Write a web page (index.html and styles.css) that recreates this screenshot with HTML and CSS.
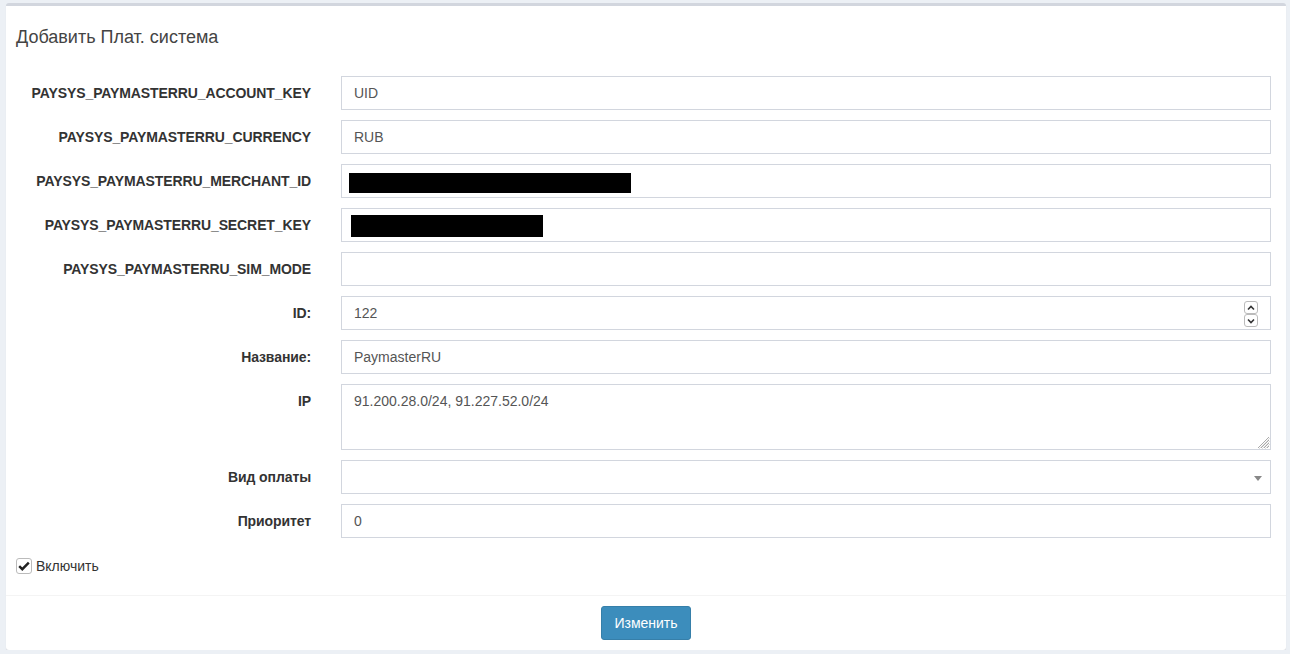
FILE: index.html
```html
<!DOCTYPE html>
<html lang="ru">
<head>
    <meta charset="UTF-8">
    <meta name="viewport" content="width=device-width, initial-scale=1.0">
    <title>Добавить Плат. система</title>
    <link rel="stylesheet" href="styles.css">
</head>
<body>

    <!-- Блок формы -->
    <div class="box">
        <div class="box-header">
            <h3 class="box-title">Добавить Плат. система</h3>
        </div>

        <form class="box-body">
            <div class="form-group">
                <label class="control-label">PAYSYS_PAYMASTERRU_ACCOUNT_KEY</label>
                <div class="control"><input class="form-control" type="text" value="UID"></div>
            </div>
            <div class="form-group">
                <label class="control-label">PAYSYS_PAYMASTERRU_CURRENCY</label>
                <div class="control"><input class="form-control" type="text" value="RUB"></div>
            </div>
            <div class="form-group">
                <label class="control-label">PAYSYS_PAYMASTERRU_MERCHANT_ID</label>
                <div class="control">
                    <input class="form-control" type="text" value="">
                    <span class="redacted redacted-merchant"></span>
                </div>
            </div>
            <div class="form-group">
                <label class="control-label">PAYSYS_PAYMASTERRU_SECRET_KEY</label>
                <div class="control">
                    <input class="form-control" type="text" value="">
                    <span class="redacted redacted-secret"></span>
                </div>
            </div>
            <div class="form-group">
                <label class="control-label">PAYSYS_PAYMASTERRU_SIM_MODE</label>
                <div class="control"><input class="form-control" type="text" value=""></div>
            </div>
            <div class="form-group">
                <label class="control-label">ID:</label>
                <div class="control">
                    <input class="form-control" type="text" value="122">
                    <span class="spinner">
                        <span class="spin spin-up">
                            <svg width="8" height="6" viewBox="0 0 8 6"><path d="M1 4.5 L4 1.5 L7 4.5" fill="none" stroke="#333" stroke-width="1.6"/></svg>
                        </span>
                        <span class="spin spin-down">
                            <svg width="8" height="6" viewBox="0 0 8 6"><path d="M1 1.5 L4 4.5 L7 1.5" fill="none" stroke="#333" stroke-width="1.6"/></svg>
                        </span>
                    </span>
                </div>
            </div>
            <div class="form-group">
                <label class="control-label">Название:</label>
                <div class="control"><input class="form-control" type="text" value="PaymasterRU"></div>
            </div>
            <div class="form-group">
                <label class="control-label">IP</label>
                <div class="control">
                    <textarea class="form-control textarea">91.200.28.0/24, 91.227.52.0/24</textarea>
                    <svg class="grip" width="14" height="14" viewBox="0 0 14 14">
                        <path d="M13 2 L2 13 M13 5 L5 13 M13 8 L8 13 M13 11 L11 13" stroke="#aaa" stroke-width="1"/>
                        <path d="M14 3 L3 14 M14 6 L6 14 M14 9 L9 14" stroke="#ddd" stroke-width="1"/>
                    </svg>
                </div>
            </div>
            <div class="form-group">
                <label class="control-label">Вид оплаты</label>
                <div class="control">
                    <div class="form-control select"><span class="caret"></span></div>
                </div>
            </div>
            <div class="form-group">
                <label class="control-label">Приоритет</label>
                <div class="control"><input class="form-control" type="text" value="0"></div>
            </div>

            <div class="checkbox">
                <span class="check-box">
                    <svg width="12" height="10" viewBox="0 0 12 10"><path d="M1.2 5.2 L4.3 8.2 L10.8 1.6" fill="none" stroke="#222" stroke-width="2.4"/></svg>
                </span>
                <span>Включить</span>
            </div>
        </form>

        <div class="box-footer">
            <button class="btn btn-primary" type="button">Изменить</button>
        </div>
    </div>

</body>
</html>
```

FILE: styles.css
```css
/* фон страницы */
body {
    font-family: "Liberation Sans", Arial, sans-serif;
    font-size: 14px;
    line-height: 20px;
    background-color: #ecf0f5;
    color: #333;
    margin: 0;
    padding: 3px 4px 0 6px;
}

/* блок */
.box {
    background: #ffffff;
    border-top: 3px solid #d2d6de;
    border-radius: 3px;
    box-shadow: 0 1px 1px rgba(0, 0, 0, 0.1);
}

.box-header {
    padding: 21px 10px 19px;
}

.box-title {
    margin: 0;
    font-size: 18px;
    line-height: 20px;
    font-weight: normal;
    color: #444;
}

.box-body {
    padding: 10px 10px 9px;
    margin: 0;
}

/* строки формы */
.form-group {
    display: flex;
    gap: 30px;
    margin-bottom: 10px;
}

.control-label {
    width: 295px;
    flex: none;
    text-align: right;
    font-weight: bold;
    padding-top: 7px;
    color: #333;
    letter-spacing: -0.1px;
}

.control {
    flex: 1;
    margin-right: 5px;
    position: relative;
}

.form-control {
    display: block;
    box-sizing: border-box;
    width: 100%;
    height: 34px;
    padding: 6px 12px;
    font-family: inherit;
    font-size: 14px;
    line-height: 20px;
    color: #555;
    background: #fff;
    border: 1px solid #d2d6de;
    border-radius: 0;
    outline: none;
    margin: 0;
}

.textarea {
    height: 66px;
    resize: none;
}

.grip {
    position: absolute;
    right: 1px;
    bottom: 1px;
}

.select {
    position: relative;
}

.caret {
    position: absolute;
    right: 8px;
    top: 15px;
    width: 0;
    height: 0;
    border-left: 4px solid transparent;
    border-right: 4px solid transparent;
    border-top: 5px solid #888;
}

/* закрытые значения */
.redacted {
    position: absolute;
    background: #000;
}

.redacted-merchant {
    left: 8px;
    top: 9px;
    width: 282px;
    height: 20px;
}

.redacted-secret {
    left: 10px;
    top: 7px;
    width: 192px;
    height: 22px;
}

/* кнопки числа */
.spinner {
    position: absolute;
    right: 13px;
    top: 5px;
    display: flex;
    flex-direction: column;
}

.spin {
    width: 12px;
    height: 11px;
    border: 1px solid #bbb;
    border-radius: 3px;
    display: flex;
    align-items: center;
    justify-content: center;
    background: #fff;
}

/* чекбокс */
.checkbox {
    display: flex;
    align-items: center;
    gap: 4px;
    padding-top: 8px;
    margin-bottom: 10px;
    height: 20px;
}

.check-box {
    box-sizing: border-box;
    width: 16px;
    height: 16px;
    border: 1px solid #bbb;
    border-radius: 3px;
    display: flex;
    align-items: center;
    justify-content: center;
    background: #fff;
}

/* подвал */
.box-footer {
    border-top: 1px solid #f4f4f4;
    padding: 10px;
    text-align: center;
}

.btn {
    font-family: inherit;
    font-size: 14px;
    line-height: 20px;
    padding: 6px 12px;
    height: 34px;
    border-radius: 3px;
    cursor: pointer;
}

.btn-primary {
    background-color: #3c8dbc;
    border: 1px solid #367fa9;
    color: #fff;
}
```
